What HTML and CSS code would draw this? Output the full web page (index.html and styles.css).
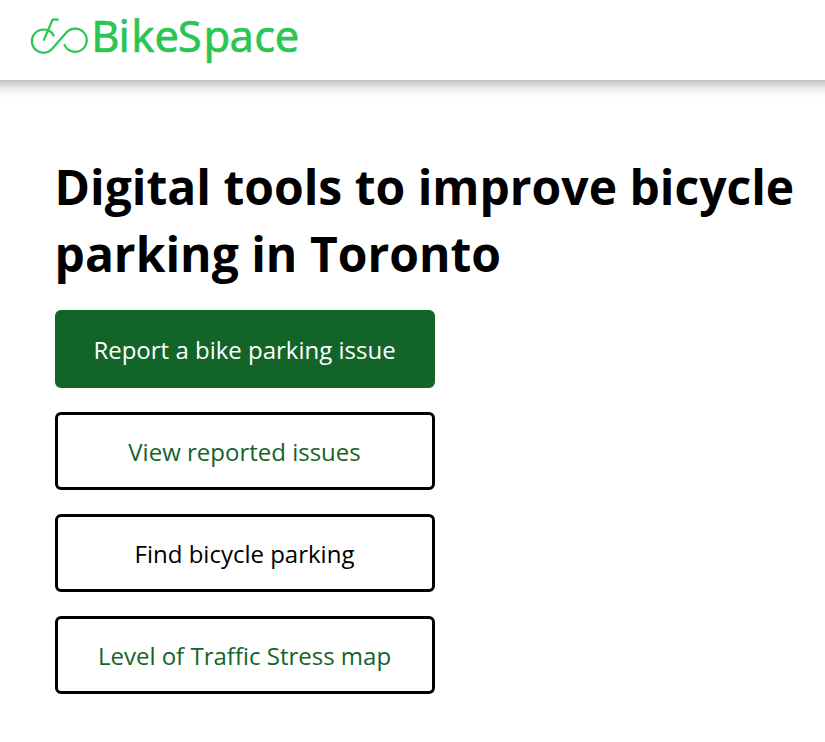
FILE: index.html
```html
<!DOCTYPE html>
<html lang="en">
<head>
    <meta charset="utf-8">
    <title>BikeSpace</title>
    <link rel="stylesheet" href="styles.css">
</head>
<body>
    <header class="header">
        <a class="logo" href="#">
            <svg width="290" height="76" viewBox="25 2 290 76" role="img" aria-label="BikeSpace">
                <g class="logo-bike">
                    <path d="M54 36.4Q52 31.6 48.3 30.6A11.6 11.6 0 1 0 52 49L66.4 32.6A11.6 11.6 0 1 1 64.2 44"/>
                    <path d="M43.6 40.6L52.6 19.6H58.6"/>
                </g>
                <text class="logo-text" y="52.2" x="91.2 118.6 131.3 154.4 177.8 203.5 229.4 254.2 274.8">BikeSpace</text>
            </svg>
        </a>
    </header>
    <main class="main">
        <h1>Digital tools to improve bicycle parking in Toronto</h1>
        <nav class="buttons">
            <a class="button button-primary" href="#">Report a bike parking issue</a>
            <a class="button" href="#">View reported issues</a>
            <a class="button button-dark" href="#">Find bicycle parking</a>
            <a class="button" href="#">Level of Traffic Stress map</a>
        </nav>
    </main>
</body>
</html>
```

FILE: styles.css
```css
body {
    font-family: "Open Sans", sans-serif;
    background-color: #fff;
    margin: 0;
    color: #000;
    overflow-x: hidden;
}
.header {
    box-sizing: border-box;
    height: 80px;
    margin: 0 -20px;
    padding: 2px 45px;
    box-shadow: 0 0 16px rgba(0, 0, 0, 0.5);
}
.logo svg {
    display: block;
}
.logo-bike {
    fill: none;
    stroke: #2bc553;
    stroke-width: 2.2;
}
.logo-text {
    font-family: "Noto Sans", sans-serif;
    font-size: 43.5px;
    fill: #2bc553;
    stroke: #2bc553;
    stroke-width: 0.6;
}
.main {
    padding: 73px 30px 0 54.5px;
}
h1 {
    margin: 0 0 23px;
    font-size: 48px;
    font-weight: bold;
    line-height: 67px;
}
.buttons {
    display: flex;
    flex-direction: column;
    gap: 24px;
    width: 380px;
}
.button {
    box-sizing: border-box;
    height: 78px;
    border: 3px solid #000;
    border-radius: 6px;
    color: #136429;
    font-size: 24px;
    line-height: 74px;
    text-align: center;
    text-decoration: none;
}
.button-primary {
    background-color: #136429;
    border-color: #136429;
    color: #fff;
}
.button-dark {
    color: #000;
}
```
